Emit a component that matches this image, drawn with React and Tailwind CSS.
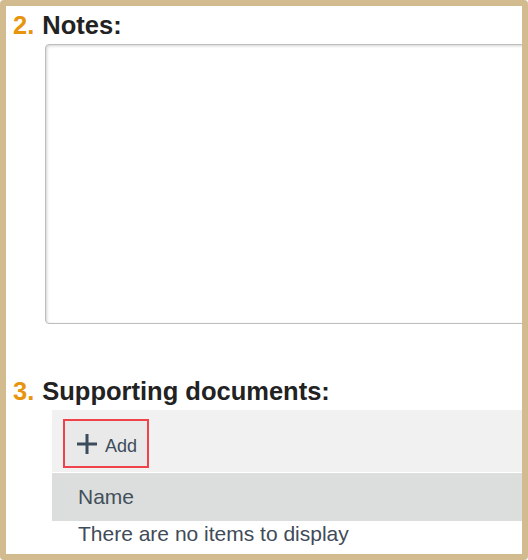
export default function App() {
  return (
    <div className="w-[528px] h-[560px] bg-white">
      <div
        className="w-[528px] h-[560px] border-[6px] border-[#d2bc8f] rounded-[4px] overflow-hidden bg-white"
        style={{ fontFamily: '"Liberation Sans", Arial, sans-serif' }}
      >
        <div className="pt-[5px] pl-[7px] h-[33px] leading-[28px] text-[25.5px] font-bold text-[#222222] whitespace-nowrap">
          <span className="text-[#e8950e]">2.</span>
          <span className="ml-[8px]">Notes:</span>
        </div>
        <div className="mt-[5px] ml-[39px] w-[520px] h-[280px] rounded-[4px] border border-[#bdbdbd] shadow-[inset_1px_1px_3px_rgba(0,0,0,0.18)] bg-white"></div>
        <div className="mt-[53px] pl-[7px] h-[28px] leading-[28px] text-[25.5px] font-bold text-[#222222] whitespace-nowrap">
          <span className="text-[#e8950e]">3.</span>
          <span className="ml-[8px]">Supporting documents:</span>
        </div>
        <div className="mt-[5px] ml-[46px] w-[520px]">
          <div className="h-[62px] bg-[#f1f1f1] pt-[9px] pl-[11px]">
            <div className="w-[86px] h-[49px] border-2 border-[#f0424a] bg-[#e9e9e9] flex items-center pl-[12px] pt-[1px]">
              <svg width="20" height="20" viewBox="0 0 20 20" className="shrink-0">
                <path d="M10 0 V20 M0 10 H20" stroke="#3b4d5c" strokeWidth="3" fill="none" />
              </svg>
              <span className="ml-[8px] text-[18px] text-[#3b4d5c] leading-[20px] mt-[4px]">Add</span>
            </div>
          </div>
          <div className="h-px bg-white"></div>
          <div className="h-[48px] bg-[#dcdedd] pl-[26px] flex items-center text-[21px] text-[#434f5b]">
            Name
          </div>
          <div className="pl-[26px] text-[21px] leading-[26px] text-[#3f4b58] whitespace-nowrap">
            There are no items to display
          </div>
        </div>
      </div>
    </div>
  );
}
